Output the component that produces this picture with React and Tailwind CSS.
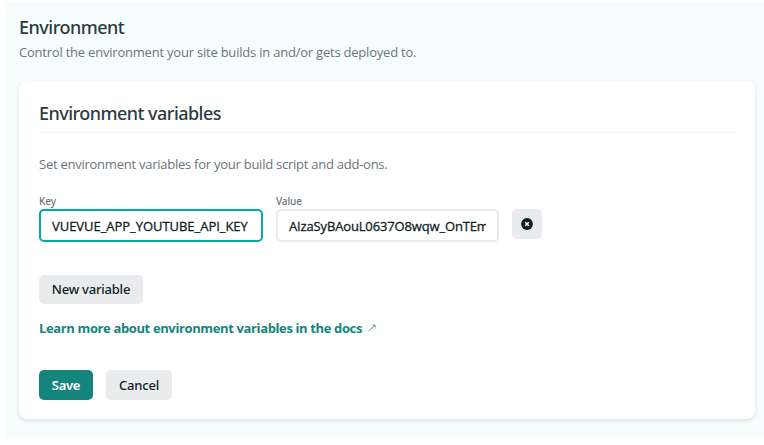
import React from "react";

function Field({ label, value, className, inputClassName }) {
  return (
    <label className={`block ${className}`}>
      <span className="block h-4 font-['Noto_Sans',sans-serif] text-[10px] leading-[17px] font-medium tracking-[-0.1px] text-[#6b757a]">
        {label}
      </span>
      <input
        readOnly
        defaultValue={value}
        className={`block h-[33px] w-full rounded-[5px] border-2 bg-white pr-[11px] pl-[11px] text-[13px] text-[#0e1e25] outline-none [-webkit-text-stroke:0.3px_#0e1e25] ${inputClassName}`}
      />
    </label>
  );
}

function RemoveIcon() {
  return (
    <svg width="12" height="12" viewBox="0 0 12 12" aria-hidden="true">
      <circle cx="6" cy="6" r="5.9" fill="#0e1e25" />
      <path d="M4.2 4.2l3.6 3.6M7.8 4.2L4.2 7.8" stroke="#fff" strokeWidth="1.5" />
    </svg>
  );
}

export default function App() {
  return (
    <div className="h-[445px] w-[764px] overflow-hidden bg-white pt-[2px] pl-[5px] font-['Open_Sans',sans-serif] whitespace-nowrap">
      <main className="h-[437px] bg-[#f6fdfd] pr-[9px] pl-[14px]">
        <header className="h-[79px] pt-[13px]">
          <h1 className="font-['Noto_Sans',sans-serif] text-[18px] leading-6 font-medium tracking-[-0.5px] text-[#2d3b41]">
            Environment
          </h1>
          <p className="mt-[3px] text-[13px] leading-5 tracking-[-0.215px] text-[#6b757a]">
            Control the environment your site builds in and/or gets deployed to.
          </p>
        </header>
        <section className="h-[338px] rounded-lg bg-white px-5 pt-5 shadow-[0_2px_4px_rgba(14,30,37,0.12)]">
          <h2 className="h-8 border-b border-[#f3f4f5] font-['Noto_Sans',sans-serif] text-[18px] leading-6 font-medium tracking-[-0.53px] text-[#2d3b41]">
            Environment variables
          </h2>
          <p className="mt-[21px] text-[13px] leading-5 tracking-[-0.25px] text-[#6b757a]">
            Set environment variables for your build script and add-ons.
          </p>
          <div className="mt-[19px] flex">
            <Field
              label="Key"
              value="VUEVUE_APP_YOUTUBE_API_KEY"
              className="w-[224px]"
              inputClassName="border-[#00ad9f] tracking-[-0.04px]"
            />
            <Field
              label="Value"
              value="AIzaSyBAouL0637O8wqw_OnTEmXk"
              className="ml-[13px] w-[223px]"
              inputClassName="border-[#e9ebed] tracking-[-0.15px]"
            />
            <button
              aria-label="Remove variable"
              className="mt-4 ml-[13px] flex h-[30px] w-[30px] items-center justify-center rounded-[5px] bg-[#e9ebed]"
            >
              <RemoveIcon />
            </button>
          </div>
          <button className="mt-[33px] block h-[29px] w-[104px] rounded-[5px] bg-[#e9ebed] pt-px font-['Noto_Sans',sans-serif] text-[13px] font-medium tracking-[-0.22px] text-[#0e1e25]">
            New variable
          </button>
          <a className="mt-[14px] flex h-5 items-center text-[13px] leading-5 font-bold text-[#15847d]">
            <span className="tracking-[-0.37px]">Learn more about environment variables in the docs</span>
            <svg width="8" height="8" viewBox="0 0 8 8" className="ml-1.5" fill="none" stroke="#4f8b88" strokeWidth="0.9">
              <path d="M0.5 7L7 1.5M4.5 1.2H7.2V3.5" />
            </svg>
          </a>
          <div className="mt-8 flex gap-[13px] font-['Noto_Sans',sans-serif]">
            <button className="h-[30px] w-[54px] rounded-[5px] bg-[#15847d] pt-px text-[13px] font-semibold tracking-[-0.3px] text-white">
              Save
            </button>
            <button className="h-[30px] w-[66px] rounded-[5px] bg-[#e9ebed] pt-px text-[13px] font-medium tracking-[-0.2px] text-[#0e1e25]">
              Cancel
            </button>
          </div>
        </section>
      </main>
    </div>
  );
}
